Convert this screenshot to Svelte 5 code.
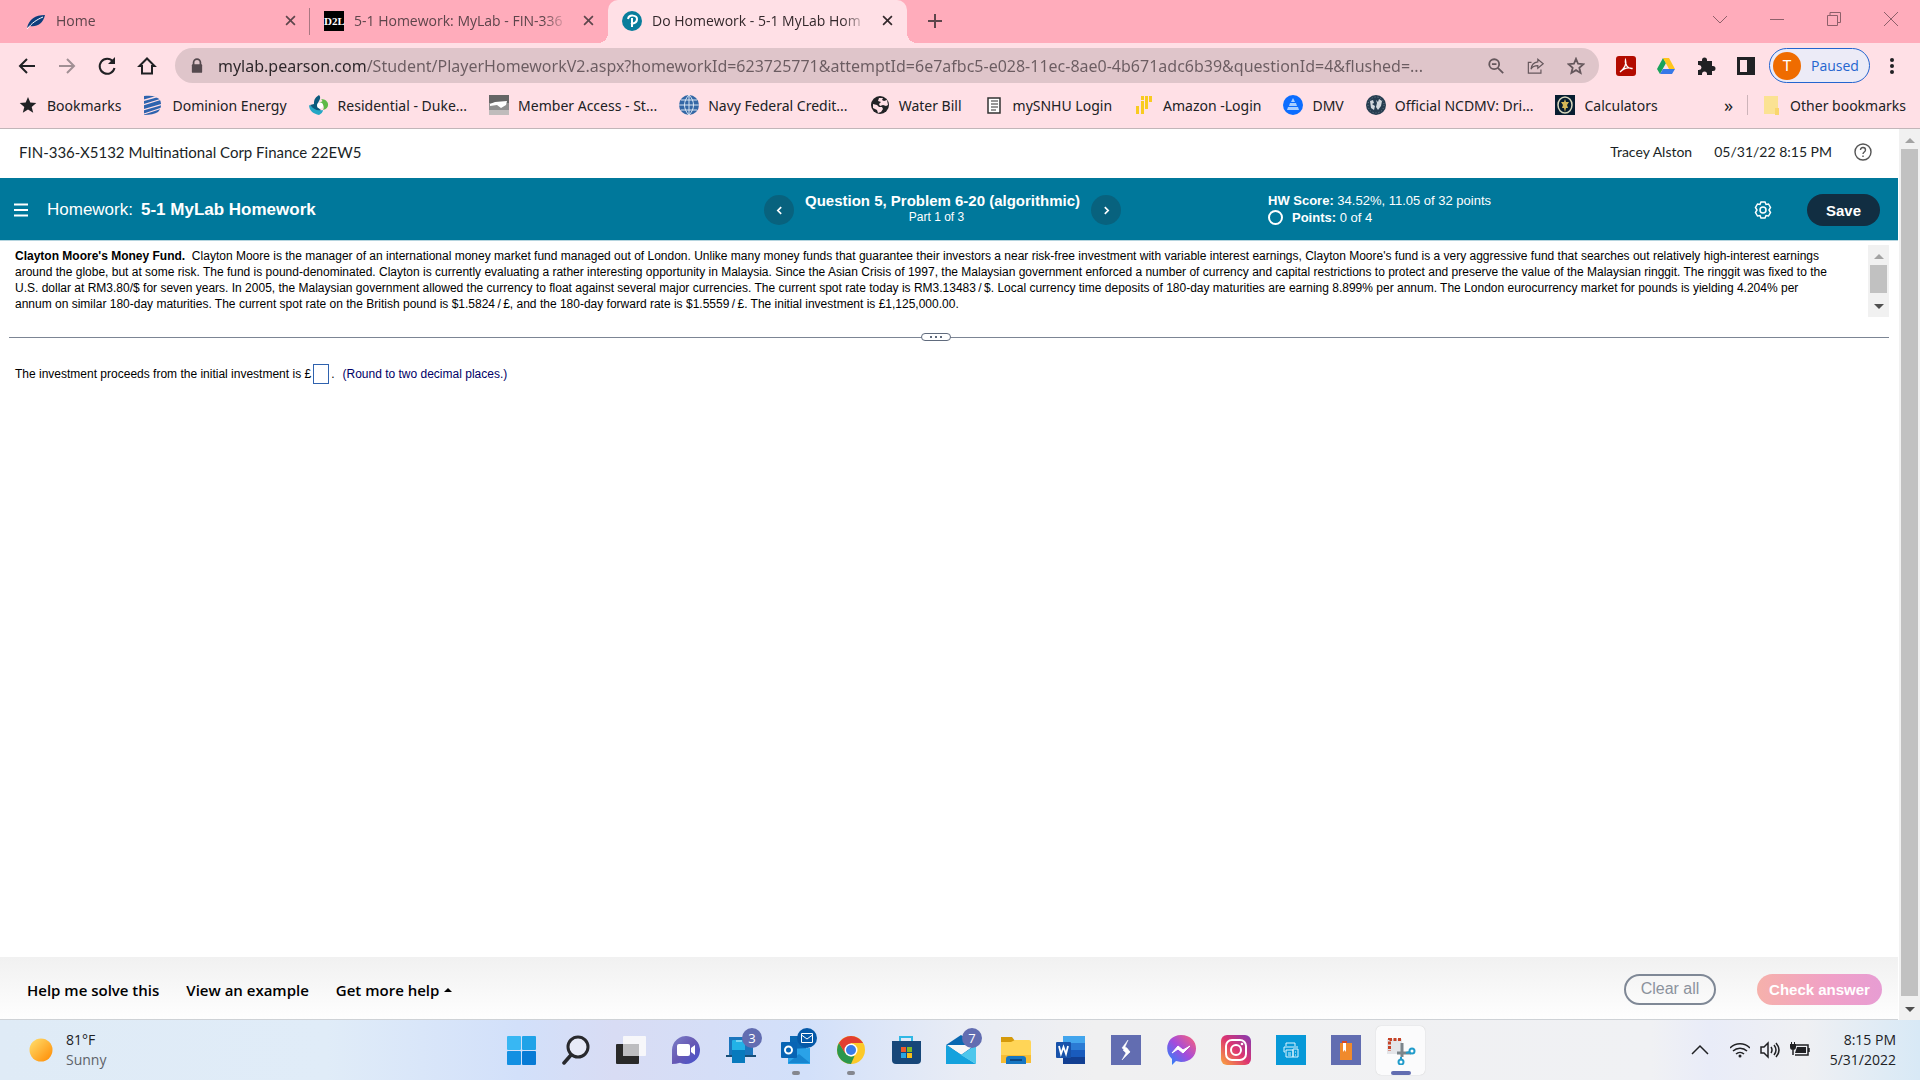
<script lang="ts">
    let answer = $state('');
    let url = $state('mylab.pearson.com/Student/PlayerHomeworkV2.aspx?homeworkId=623725771&attemptId=6e7afbc5-e028-11ec-8ae0-4b671adc6b39&questionId=4&flushed=...');

    const bookmarks = [
        { icon: 'star', label: 'Bookmarks' },
        { icon: 'dominion', label: 'Dominion Energy' },
        { icon: 'duke', label: 'Residential - Duke...' },
        { icon: 'state', label: 'Member Access - St...' },
        { icon: 'navy', label: 'Navy Federal Credit...' },
        { icon: 'world', label: 'Water Bill' },
        { icon: 'page', label: 'mySNHU Login' },
        { icon: 'amazon', label: 'Amazon -Login' },
        { icon: 'dmv', label: 'DMV' },
        { icon: 'ncdmv', label: 'Official NCDMV: Dri...' },
        { icon: 'calc', label: 'Calculators' }
    ];

    const apps = [
        { icon: 'windows', label: 'Start' },
        { icon: 'search', label: 'Search' },
        { icon: 'taskview', label: 'Task view' },
        { icon: 'chat', label: 'Chat' },
        { icon: 'phone', label: 'Your Phone', badge: '3' },
        { icon: 'outlook', label: 'Outlook', running: true },
        { icon: 'chrome', label: 'Chrome', running: true },
        { icon: 'store', label: 'Store' },
        { icon: 'mail', label: 'Mail', badge: '7' },
        { icon: 'folder', label: 'File Explorer' },
        { icon: 'word', label: 'Word' },
        { icon: 'bolt', label: 'Shortcuts' },
        { icon: 'messenger', label: 'Messenger' },
        { icon: 'instagram', label: 'Instagram' },
        { icon: 'printer', label: 'Printer' },
        { icon: 'book', label: 'Reader' },
        { icon: 'snip', label: 'Snipping Tool', active: true }
    ];
</script>

{#snippet favicon(name: string)}
    <svg class="fav" viewBox="0 0 20 20" aria-hidden="true">
        {#if name === 'star'}
            <path d="M10 2l2.3 5.6 6 .4-4.6 3.9 1.5 5.9L10 14.5l-5.2 3.3 1.5-5.9L1.700 8l6-.4z" fill="#202124" />
        {:else if name === 'dominion'}
            <path d="M1 1c7-1 13 0 16 4 2 4 1 9-2 12-3 2-8 3-14 3z" fill="#2d63ae" />
            <path d="M0 5.500L16 1M0 10l19-6M0 15l20-6M1 19l18-6" stroke="#ffe0e6" stroke-width="1.300" />
        {:else if name === 'duke'}
            <path d="M12 4c8 0 10 9 2 11 2-4 0-6-4-8 4 0 4-1 2-3z" fill="#5eb947" />
            <path d="M0 10c0 6 5 9 10 10 2-1 4-3 4-5-5 1-8-2-14-5z" fill="#25a7c5" />
            <path d="M10 0C5 3 5 6 5 9l-4 1c3 4 7 6 11 5-4-3-4-6-2-9 1-2 2-4 0-6z" fill="#0b5a7d" />
            <circle cx="11" cy="10.500" r="3" fill="#fff" />
        {:else if name === 'state'}
            <path d="M0 0h20v8H0z" fill="#656565" /><path d="M0 8h20v12H0z" fill="#8f8f8f" /><path d="M0 15h20v5H0z" fill="#c0bcbc" />
            <path d="M1 9l5-2 12-1-1 4-5 3-4-3-7 1z" fill="#fff" />
        {:else if name === 'navy'}
            <circle cx="10" cy="10" r="10" fill="#3467a5" />
            <path d="M0 10h20M2 5h16M2 15h16M10 0v20M10 0C4 6 4 14 10 20M10 0c6 6 6 14 0 20" fill="none" stroke="#d9e6f3" stroke-width="1" />
        {:else if name === 'world'}
            <circle cx="10" cy="10" r="9" fill="#222326" />
            <path d="M3 9l4 1 2 2h3l1 2-2 3-3 1-1-3-4-2zM9 3l4 0-1 2 2 1 3-1 1 5-2 1-3-1-3 1-1-2 2-2-3-1z" fill="#ffe0e6" />
        {:else if name === 'page'}
            <path d="M4 3h12v15H4z" fill="#fff" stroke="#333" stroke-width="1.500" /><path d="M7 6h7M7 9h7M7 12h7M7 15h5" stroke="#777" stroke-width="1.300" />
        {:else if name === 'amazon'}
            <path d="M2 11h3v8H2zM7 6h3v13H7zM7 1h3v4H7zM11 1h3v13h-3zM15 1h3v6h-3z" fill="#f8cb20" />
        {:else if name === 'dmv'}
            <circle cx="10" cy="10" r="10" fill="#0c6dff" /><path d="M10 3l2 4H8zM7 8h6l1 3H6zM5 12h10l1 3H4z" fill="#a8ceff" />
        {:else if name === 'ncdmv'}
            <circle cx="10" cy="10" r="10" fill="#263d50" /><path d="M4 6l3-1 1 3-2 1 3 2-1 4-3-2zM10 5l2 2 1-3 3 2-1 5-3 4-2-3 1-4z" fill="#d2d8dd" /><circle cx="10" cy="10" r="8" fill="none" stroke="#708190" stroke-dasharray="1 2" />
        {:else if name === 'calc'}
            <path d="M0 0h20v20H0z" fill="#071d31" /><ellipse cx="10" cy="10" rx="7" ry="8" fill="none" stroke="#d6d5bb" stroke-width="1.500" /><path d="M10 4l1 3 3 0-2 3 1 3-2 0-1 4-1-4-2 0 1-3-2-3 3 0z" fill="#d4b657" />
        {:else if name === 'leaf'}
            <path d="M1 17C3 8 9 4 19 4c-2 9-8 12-15 11z" fill="#0d3e7c" /><path d="M1 18C6 12 10 9 17 6" stroke="#fff" stroke-width="1" fill="none" />
        {:else if name === 'pearson'}
            <circle cx="10" cy="10" r="10" fill="#087d9c" /><path d="M6 8c1-5 9-4 9 0 0 4-4 5-6 4M10 7v9" fill="none" stroke="#fff" stroke-width="2" />
        {:else if name === 'folder'}
            <path d="M3 1h14v18H3z" fill="#fbe293" /><path d="M14 13h4v7h-4z" fill="#f9d66d" />
        {/if}
    </svg>
{/snippet}

{#snippet appIcon(name: string)}
    <svg class="app-icon" viewBox="0 0 30 30" aria-hidden="true">
        {#if name === 'windows'}
            <rect x="1" y="1" width="14" height="14" rx="1" fill="#38b7f3" /><rect x="16" y="1" width="14" height="14" rx="1" fill="#20a3e8" />
            <rect x="1" y="16" width="14" height="14" rx="1" fill="#1390e2" /><rect x="16" y="16" width="14" height="14" rx="1" fill="#077bd5" />
        {:else if name === 'search'}
            <circle cx="17" cy="12" r="10" fill="#e7eaf7" stroke="#28292d" stroke-width="3" /><path d="M10 20l-7 8" stroke="#28292d" stroke-width="3.500" stroke-linecap="round" />
        {:else if name === 'taskview'}
            <rect x="0" y="9" width="23" height="20" rx="1" fill="#292929" /><rect x="7" y="1" width="23" height="20" rx="1" fill="#f7f7fa" /><path d="M7 9h16v12H7z" fill="#bdbdc0" />
        {:else if name === 'chat'}
            <path d="M1 29V15a14 14 0 1 1 8 12.700Q5 29 1 29z" fill="url(#chat)" /><rect x="6" y="9" width="13" height="12" rx="2" fill="#fff" /><path d="M20 13l4-3v10l-4-3z" fill="#fff" />
        {:else if name === 'phone'}
            <path d="M3 2h24v19H3z" fill="#1b75bd" /><path d="M0 20h30v2H0z" fill="#174f79" /><rect x="6" y="5" width="13" height="23" rx="1" fill="#22b2e7" /><path d="M6 15h13v13H6z" fill="#087abd" /><path d="M10 6h6" stroke="#c9f4ff" />
        {:else if name === 'outlook'}
            <path d="M9 1h16v15H9z" fill="#0968b4" /><path d="M7 14l22-1v16H7z" fill="#2aa2e8" /><path d="M7 28l11-9 11 9z" fill="#1685d0" /><rect x="0" y="7" width="16" height="16" rx="1" fill="#0864b4" /><circle cx="7.500" cy="15" r="3.500" fill="none" stroke="#fff" stroke-width="2" />
        {:else if name === 'chrome'}
            <circle cx="15" cy="15" r="14" fill="#fcc928" /><path d="M15 29A14 14 0 0 1 2.900 8L9.400 18.200 15 21.500l3.500-.500z" fill="#2b974d" /><path d="M2.900 8a14 14 0 0 1 24.200 0H15l-6 10z" fill="#e23e31" /><circle cx="15" cy="15" r="6.500" fill="#fff" /><circle cx="15" cy="15" r="5" fill="#397ce8" />
        {:else if name === 'store'}
            <path d="M9 8V2h12v6" fill="none" stroke="#30b8e5" stroke-width="2" /><path d="M1 6h29v19q0 4-4 4H5q-4 0-4-4z" fill="#174779" /><path d="M10 12h5v5h-5z" fill="#f05a2a" /><path d="M16 12h5v5h-5z" fill="#7eb927" /><path d="M10 18h5v5h-5z" fill="#28a6e3" /><path d="M16 18h5v5h-5z" fill="#f9bd19" />
        {:else if name === 'mail'}
            <path d="M0 10L15 0l15 10-15 11z" fill="#0968b1" /><path d="M1 10h28L15 20z" fill="#f7f7f7" /><path d="M0 10l30 19H0z" fill="#14a2dd" /><path d="M30 10v19L15 20z" fill="#4dc7ec" />
        {:else if name === 'folder'}
            <path d="M0 2h11l3 4h-2v5H0z" fill="#d59a0b" /><path d="M0 7h10l4-2h14q2 0 2 2v21H0z" fill="#ffd557" /><path d="M0 20h30v8H0z" fill="#f7bd34" /><path d="M5 29v-5q0-3 3-3h14q3 0 3 3v5z" fill="#1676c2" /><path d="M9 25h12" stroke="#0b4884" stroke-width="2" />
        {:else if name === 'word'}
            <path d="M7 1h22v8H7z" fill="#42a5ed" /><path d="M7 8h22v7H7z" fill="#2b7bd4" /><path d="M7 15h22v7H7z" fill="#195bbd" /><path d="M7 22h22v7H7z" fill="#123f92" /><rect x="0" y="7" width="15" height="16" rx="1" fill="#1852aa" /><path d="M3 11l2 8 2.500-7 2.500 7 2-8" fill="none" stroke="#fff" stroke-width="1.800" />
        {:else if name === 'bolt'}
            <path d="M0 0h30v30H0z" fill="#626db1" /><path d="M17 5l-6 8 3 2 5 2-3-4-2-1zM11 25l8-8-5-3-2 1 3 3z" fill="#fff" stroke="#fff" stroke-width=".5" />
        {:else if name === 'messenger'}
            <path d="M6 30v-6C-3 16 1 0 15 0c20 0 20 27 0 27l-5-1z" fill="url(#messenger)" /><path d="M6 18l6-7 5 4 7-4-7 7-5-4z" fill="#fff" stroke="#fff" stroke-width="1" />
        {:else if name === 'instagram'}
            <rect width="30" height="30" rx="6" fill="url(#instagram)" /><rect x="5" y="5" width="20" height="20" rx="6" fill="none" stroke="#fff" stroke-width="2" /><circle cx="15" cy="15" r="5" fill="none" stroke="#fff" stroke-width="2" /><circle cx="21" cy="9" r="1.300" fill="#fff" />
        {:else if name === 'printer'}
            <path d="M0 0h30v30H0z" fill="#0799d8" /><path d="M10 11V8h9v3M9 17H8v-5h14M10 15h7v7h-7zM12 18h3M12 20h3M17 14h5v8h-5zM19 17h1M19 20h1" fill="none" stroke="#dff5ff" />
        {:else if name === 'book'}
            <path d="M0 0h30v30H0z" fill="#626db1" /><path d="M9 8h12v17H9z" fill="#f08a2c" /><path d="M12 8h3v9l-1.500-2L12 17z" fill="#fff" /><path d="M11 6h5v2h-5z" fill="#d64821" />
        {:else if name === 'snip'}
            <rect x="1" y="4" width="15" height="15" fill="#e4e5e9" /><path d="M15 4.500H3.500V16" fill="none" stroke="#c64327" stroke-width="3" stroke-dasharray="3 1.500" /><path d="M16 8v14M11 18h14" stroke="#7c858b" stroke-width="3" /><circle cx="26" cy="16" r="2.500" fill="#fff" stroke="#219ccb" stroke-width="2" /><circle cx="15" cy="27" r="2.500" fill="#fff" stroke="#219ccb" stroke-width="2" /><path d="M20 18l4-1M15 25v-3" stroke="#219ccb" stroke-width="2" />
        {/if}
    </svg>
{/snippet}

<svg class="defs" width="0" height="0" aria-hidden="true">
    <defs>
        <linearGradient id="chat" x1="0" y1="0" x2="1" y2="1"><stop offset="0" stop-color="#7c80c8" /><stop offset=".5" stop-color="#6759b4" /><stop offset="1" stop-color="#4352cf" /></linearGradient>
        <linearGradient id="messenger" x1="1" y1="0" x2="0" y2="1"><stop offset="0" stop-color="#ff6474" /><stop offset=".5" stop-color="#a44bdc" /><stop offset="1" stop-color="#168cff" /></linearGradient>
        <linearGradient id="instagram" x1="1" y1="0" x2="0" y2="1"><stop offset="0" stop-color="#823bb3" /><stop offset=".5" stop-color="#dd3470" /><stop offset="1" stop-color="#fba73e" /></linearGradient>
        <linearGradient id="sun" x1="0" y1="0" x2="1" y2="1"><stop offset="0" stop-color="#ffe170" /><stop offset="1" stop-color="#ff8900" /></linearGradient>
    </defs>
</svg>

<div class="screen">
    <div class="tabstrip">
        <div class="tab first">
            {@render favicon('leaf')}
            <span class="tab-title">Home</span>
            <button class="close" aria-label="Close tab"><svg viewBox="0 0 10 10"><path d="M1 1l8 8M9 1L1 9" /></svg></button>
        </div>
        <div class="tab second">
            <span class="d2l">D2L</span>
            <span class="tab-title">5-1 Homework: MyLab - FIN-336</span>
            <button class="close" aria-label="Close tab"><svg viewBox="0 0 10 10"><path d="M1 1l8 8M9 1L1 9" /></svg></button>
        </div>
        <div class="tab current">
            {@render favicon('pearson')}
            <span class="tab-title">Do Homework - 5-1 MyLab Hom</span>
            <button class="close" aria-label="Close tab"><svg viewBox="0 0 10 10"><path d="M1 1l8 8M9 1L1 9" /></svg></button>
        </div>
        <button class="newtab" aria-label="New tab"><svg viewBox="0 0 16 16"><path d="M8 1v14M1 8h14" /></svg></button>
        <div class="winctl">
            <button aria-label="Search tabs"><svg viewBox="0 0 14 14"><path d="M0 4l7 7 7-7" /></svg></button>
            <button aria-label="Minimize"><svg viewBox="0 0 14 14"><path d="M0 7.500h14" /></svg></button>
            <button aria-label="Restore"><svg viewBox="0 0 14 14"><path d="M.5 3.500h10v10H.5zM3 3.500v-3h10.500v10h-3" /></svg></button>
            <button aria-label="Close"><svg viewBox="0 0 14 14"><path d="M0 0l14 14M14 0L0 14" /></svg></button>
        </div>
    </div>

    <div class="toolbar">
        <button class="tool" aria-label="Back"><svg viewBox="0 0 20 20"><path d="M18 10H3M10 3l-7 7 7 7" /></svg></button>
        <button class="tool faded" aria-label="Forward"><svg viewBox="0 0 20 20"><path d="M2 10h15M10 3l7 7-7 7" /></svg></button>
        <button class="tool" aria-label="Reload"><svg viewBox="0 0 20 20"><path d="M16 5.500A7.500 7.500 0 1 0 17.500 12" /><path d="M18 1v7h-7z" class="solid" /></svg></button>
        <button class="tool" aria-label="Home"><svg viewBox="0 0 20 20"><path d="M2.500 10L10 2.500 17.500 10H15v7.500H5V10z" /></svg></button>
        <div class="omnibox">
            <svg class="lock" viewBox="0 0 14 18"><path d="M3 8V5a4 4 0 0 1 8 0v3" fill="none" stroke="#55494e" stroke-width="2" /><rect x="1" y="7" width="12" height="10" rx="1" fill="#55494e" /></svg>
            <input class="url" aria-label="Address" bind:value={url} spellcheck="false" />
            <button aria-label="Zoom"><svg viewBox="0 0 20 20"><circle cx="8" cy="8" r="5.500" /><path d="M12 12l6 6M5.500 8h5" /></svg></button>
            <button aria-label="Share"><svg viewBox="0 0 20 20"><path class="thin" d="M5 6H1.500v12h14v-4M12 2.500l6 5-6 5V9.500c-4 0-6 1-7.500 4C5 9 7 6 12 5.500z" /></svg></button>
            <button aria-label="Bookmark"><svg viewBox="0 0 20 20"><path d="M10 2l2.300 5.500 5.900.5-4.500 3.900 1.400 5.800L10 14.600l-5.100 3.100 1.400-5.800L1.800 8l5.900-.5z" /></svg></button>
        </div>
        <div class="extensions">
            <button class="tool" aria-label="Adobe Acrobat"><svg viewBox="0 0 20 20"><rect width="20" height="20" rx="3" fill="#b30b00" stroke="none" /><path d="M4 16C8 13 11 8 9.500 4c-1 5 3 9 7 8.500-4-1.500-9 0-12.500 3.500" stroke="#fff" stroke-width="1.300" /></svg></button>
            <button class="tool" aria-label="Google Drive"><svg viewBox="0 0 20 20" class="flat"><path d="M7 2l3 5-6 11-3-5z" fill="#19a35b" /><path d="M7 2h6l6 11h-6z" fill="#ffc51b" /><path d="M4 18l3-5h12l-3 5z" fill="#3778e8" /></svg></button>
            <button class="tool" aria-label="Extensions"><svg viewBox="0 0 20 20"><path class="solid" d="M2 5h4V4a2.500 2.500 0 0 1 5 0v1h5v5h1a2.500 2.500 0 0 1 0 5h-1v4h-5v-1a2.500 2.500 0 0 0-5 0v1H2v-5h1a2.500 2.500 0 0 0 0-5H2z" /></svg></button>
            <button class="tool" aria-label="Side panel"><svg viewBox="0 0 20 20"><path class="solid" d="M1 1h18v18H1zM4 4v12h7V4z" fill-rule="evenodd" /></svg></button>
        </div>
        <button class="profile"><span class="avatar">T</span><span>Paused</span></button>
        <button class="tool" aria-label="Menu"><svg viewBox="0 0 20 20"><circle class="solid" cx="10" cy="4" r="2" /><circle class="solid" cx="10" cy="10" r="2" /><circle class="solid" cx="10" cy="16" r="2" /></svg></button>
    </div>

    <nav class="bookmarks">
        {#each bookmarks as mark}
            <a href="#top">{@render favicon(mark.icon)}<span>{mark.label}</span></a>
        {/each}
        <button class="more" aria-label="More bookmarks">»</button>
        <a class="other" href="#top">{@render favicon('folder')}<span>Other bookmarks</span></a>
    </nav>

    <div class="viewport">
        <div class="page">
            <header class="course">
                <span class="course-name">FIN-336-X5132 Multinational Corp Finance 22EW5</span>
                <span>Tracey Alston</span>
                <span>05/31/22 8:15 PM</span>
                <button aria-label="Help"><svg viewBox="0 0 18 18"><circle cx="9" cy="9" r="8" /><path d="M6.500 7c0-3.500 5-3 5 0 0 2-2.500 2-2.500 4M9 12.500V14" /></svg></button>
            </header>

            <div class="banner">
                <div class="assignment">
                    <button class="burger" aria-label="Menu"><svg viewBox="0 0 14 14"><path d="M0 1.500h14M0 7h14M0 12.500h14" /></svg></button>
                    <span>Homework:</span>
                    <strong>5-1 MyLab Homework</strong>
                </div>
                <div class="question-nav">
                    <button class="round" aria-label="Previous question"><svg viewBox="0 0 8 8"><path d="M5.500 1l-3 3 3 3" /></svg></button>
                    <div class="question-title">
                        <strong>Question 5, Problem 6-20 (algorithmic)</strong>
                        <span>Part 1 of 3</span>
                    </div>
                    <button class="round" aria-label="Next question"><svg viewBox="0 0 8 8"><path d="M2.500 1l3 3-3 3" /></svg></button>
                </div>
                <div class="status">
                    <div class="score">
                        <span><b>HW Score:</b> 34.52%, 11.05 of 32 points</span>
                        <span class="points"><i></i><span><b>Points:</b> 0 of 4</span></span>
                    </div>
                    <button class="gear" aria-label="Settings"><svg viewBox="0 0 18 18"><path d="M7 1h4l1 2.500 2.500-.5 2 3.500L15 9l1.500 2.500-2 3.500-2.500-.5L11 17H7l-1-2.500-2.500.5-2-3.500L3 9 1.500 6.500l2-3.500 2.500.5z" /><circle cx="9" cy="9" r="3" /></svg></button>
                    <button class="save">Save</button>
                </div>
            </div>

            <section class="problem">
                <p>
                    <b>Clayton Moore's Money Fund.</b>&nbsp; Clayton Moore is the manager of an international money market fund managed out of London. Unlike many money funds that guarantee their investors a near risk-free investment with variable interest earnings, Clayton Moore's fund is a very aggressive fund that searches out relatively high-interest earnings around the globe, but at some risk. The fund is pound-denominated. Clayton is currently evaluating a rather interesting opportunity in Malaysia. Since the Asian Crisis of 1997, the Malaysian government enforced a number of currency and capital restrictions to protect and preserve the value of the Malaysian ringgit. The ringgit was fixed to the U.S. dollar at RM3.80/$ for seven years. In 2005, the Malaysian government allowed the currency to float against several major currencies. The current spot rate today is RM3.13483&thinsp;/&thinsp;$. Local currency time deposits of 180-day maturities are earning 8.899% per annum. The London eurocurrency market for pounds is yielding 4.204% per annum on similar 180-day maturities. The current spot rate on the British pound is $1.5824&thinsp;/&thinsp;£, and the 180-day forward rate is $1.5559&thinsp;/&thinsp;£. The initial investment is £1,125,000.00.
                </p>
                <div class="scrollbar small">
                    <i class="up"></i>
                    <div class="thumb"></div>
                    <i class="down"></i>
                </div>
            </section>

            <div class="divider">
                <button aria-label="Resize"><i></i><i></i><i></i></button>
            </div>

            <section class="answer">
                <label for="proceeds">The investment proceeds from the initial investment is £</label>
                <input id="proceeds" type="text" bind:value={answer} />
                <span>.</span>
                <span class="hint">(Round to two decimal places.)</span>
            </section>

            <footer class="actions">
                <button class="link">Help me solve this</button>
                <button class="link">View an example</button>
                <button class="link">Get more help <i></i></button>
                <button class="clear">Clear all</button>
                <button class="check">Check answer</button>
            </footer>
        </div>
        <div class="scrollbar">
            <i class="up"></i>
            <div class="thumb"></div>
            <i class="down"></i>
        </div>
    </div>

    <div class="taskbar">
        <div class="weather">
            <svg viewBox="0 0 24 24"><circle cx="12" cy="12" r="11.500" fill="url(#sun)" /></svg>
            <div><span>81°F</span><span class="sky">Sunny</span></div>
        </div>
        <div class="apps">
            {#each apps as app}
                <button class="app" class:active={app.active} aria-label={app.label}>
                    {@render appIcon(app.icon)}
                    {#if app.badge}<span class="badge">{app.badge}</span>{/if}
                    {#if app.icon === 'outlook'}
                        <span class="badge blue"><svg viewBox="0 0 12 10"><path d="M.5.5h11v9H.5zM.5 2L6 6l5.500-4" /></svg></span>
                    {/if}
                    {#if app.running || app.active}<i class="dot"></i>{/if}
                </button>
            {/each}
        </div>
        <div class="tray">
            <svg viewBox="0 0 20 20"><path d="M2 14l8-8 8 8" /></svg>
            <div class="tray-icons">
                <svg viewBox="0 0 20 20"><path d="M0 8a14 14 0 0 1 20 0M3 11a10 10 0 0 1 14 0M6 14a6 6 0 0 1 8 0" /><circle cx="10" cy="16" r="1.500" class="solid" /></svg>
                <svg viewBox="0 0 20 20"><path d="M1 7h3l4-4v14l-4-4H1zM11 7q2 3 0 6M14 5q4 5 0 10M16 3q6 7 0 14" /></svg>
                <svg viewBox="0 0 20 20"><path d="M6 5h12v10H5M3 15v-5M19 8v4" /><path class="solid" d="M0 4h6v3q0 3-3 3T0 7zM1 2h1v2H1zM4 2h1v2H4zM7 7h9v6H5z" /></svg>
            </div>
            <div class="clock"><span>8:15 PM</span><span>5/31/2022</span></div>
        </div>
    </div>
</div>

<style>
    :global(body) {
        margin: 0;
    }

    .screen {
        display: flex;
        flex-direction: column;
        height: 100vh;
        overflow: hidden;
        font-family: "Open Sans", "Noto Sans", sans-serif;
        font-size: 14px;
        color: #202124;
        background: #fff;
    }

    .screen :global(*) {
        box-sizing: border-box;
    }

    .defs {
        position: absolute;
    }

    svg {
        display: block;
        flex: none;
    }

    button {
        display: flex;
        align-items: center;
        justify-content: center;
        flex: none;
        margin: 0;
        padding: 0;
        border: 0;
        background: none;
        font: inherit;
        color: inherit;
    }

    a {
        color: inherit;
        text-decoration: none;
    }

    .fav {
        width: 20px;
        height: 20px;
    }

    /* browser tabs */
    .tabstrip {
        display: flex;
        height: 43px;
        flex: none;
        background: #ffacbb;
    }

    .tab {
        display: flex;
        align-items: center;
        gap: 10px;
        width: 299px;
        padding: 0 11px 2px 14px;
        color: #5d454b;
    }

    .tab.first {
        width: 309px;
        padding-left: 26px;
        padding-right: 10px;
    }

    .tab.second {
        border-left: 1px solid transparent;
        border-image: linear-gradient(transparent 9px, #a97781 9px, #a97781 34px, transparent 34px) 1;
    }

    .tab.current {
        position: relative;
        width: 299px;
        border-radius: 10px 10px 0 0;
        background: #ffe0e6;
        color: #33282b;
    }

    .tab.current::before,
    .tab.current::after {
        content: "";
        position: absolute;
        bottom: 0;
        width: 10px;
        height: 10px;
    }

    .tab.current::before {
        right: 100%;
        background: radial-gradient(circle at 0 0, transparent 10px, #ffe0e6 10px);
    }

    .tab.current::after {
        left: 100%;
        background: radial-gradient(circle at 100% 0, transparent 10px, #ffe0e6 10px);
    }

    .tab-title {
        flex: 1;
        overflow: hidden;
        white-space: nowrap;
        mask-image: linear-gradient(90deg, #000 88%, transparent);
    }

    .d2l {
        width: 20px;
        background: #000;
        color: #fff;
        font: bold 11px/20px "Liberation Serif", serif;
        text-align: center;
    }

    .close {
        width: 18px;
        height: 20px;
    }

    .close svg {
        width: 11px;
        height: 11px;
        stroke: currentColor;
        stroke-width: 1.5;
    }

    .newtab {
        width: 56px;
        height: 41px;
    }

    .newtab svg {
        width: 16px;
        height: 16px;
        stroke: #5d454b;
        stroke-width: 2;
    }

    .winctl {
        display: flex;
        height: 38px;
        margin-left: auto;
        padding-right: 1px;
    }

    .winctl button {
        width: 57px;
    }

    .winctl svg {
        width: 14px;
        height: 14px;
        fill: none;
        stroke: #8e606a;
    }

    /* address row */
    .toolbar {
        display: flex;
        align-items: center;
        flex: none;
        height: 45px;
        padding: 0 8px 0 7px;
        background: #ffe0e6;
    }

    .tool {
        width: 40px;
        height: 36px;
    }

    .tool svg {
        width: 20px;
        height: 20px;
        fill: none;
        stroke: #202124;
        stroke-width: 2;
    }

    .tool .flat {
        stroke: none;
    }

    .tool.faded svg {
        stroke: #a18f94;
    }

    .solid {
        fill: #202124;
        stroke: none;
    }

    .omnibox {
        display: flex;
        align-items: center;
        flex: 1;
        height: 35px;
        margin-left: 8px;
        padding: 0 3px 0 16px;
        border-radius: 18px;
        background: #dfc5ca;
    }

    .lock {
        width: 12px;
        height: 16px;
    }

    /* host name darker than the rest of the address */
    .url {
        flex: 1;
        min-width: 0;
        margin-left: 15px;
        padding: 0;
        border: 0;
        outline: 0;
        font-family: "Noto Sans", sans-serif;
        font-size: 16px;
        color: transparent;
        background: linear-gradient(90deg, #2b2528 149px, #6b5c61 149px);
        background-clip: text;
    }

    .omnibox button {
        width: 40px;
        height: 30px;
    }

    .omnibox button svg {
        width: 18px;
        height: 18px;
        fill: none;
        stroke: #65575c;
        stroke-width: 2;
    }

    .omnibox .thin {
        stroke-width: 1.3;
    }

    .extensions {
        display: flex;
        padding: 0 3px 0 7px;
    }

    .profile {
        gap: 10px;
        justify-content: flex-start;
        width: 101px;
        height: 35px;
        margin-right: 2px;
        padding-left: 3px;
        border: 1px solid #2465cf;
        border-radius: 18px;
        background: #ecebf7;
        color: #2465cf;
    }

    .avatar {
        width: 28px;
        border-radius: 50%;
        background: #ef6c00;
        color: #fff;
        font: 15px/28px Roboto, sans-serif;
    }

    /* bookmarks row */
    .bookmarks {
        display: flex;
        align-items: center;
        flex: none;
        gap: 22px;
        height: 41px;
        padding: 0 14px 6px 18px;
        border-bottom: 1px solid #c2b6b9;
        background: #ffe0e6;
        font-family: "Noto Sans", sans-serif;
        white-space: nowrap;
    }

    .bookmarks a {
        display: flex;
        align-items: center;
        gap: 9px;
    }

    .more {
        margin-left: auto;
        font-size: 18px;
    }

    .bookmarks .other {
        margin-left: -8px;
        padding-left: 13px;
        border-left: 1px solid #cdb4ba;
    }

    /* page and its scrollbar */
    .viewport {
        display: flex;
        flex: 1;
        min-height: 0;
    }

    .page {
        display: flex;
        flex: 1;
        flex-direction: column;
        min-width: 0;
        font-family: "Liberation Sans", Arial, sans-serif;
        color: #000;
    }

    .scrollbar {
        display: flex;
        flex-direction: column;
        align-items: center;
        width: 21px;
        padding: 9px 0 8px;
        gap: 6px;
        background: #f1f1f1;
    }

    .scrollbar .thumb {
        flex: 1;
        width: 17px;
        background: #c1c1c1;
    }

    .up,
    .down {
        border: 5px solid transparent;
    }

    .up {
        border-top: 0;
        border-bottom-color: #a3a3a3;
    }

    .down {
        margin-top: 5px;
        border-bottom: 0;
        border-top-color: #505050;
    }

    .course {
        display: flex;
        align-items: center;
        gap: 22px;
        flex: none;
        height: 49px;
        padding: 0 27px 4px 19px;
        font-family: Lato, sans-serif;
        color: #1a1f26;
    }

    .course-name {
        flex: 1;
        font-size: 15px;
    }

    .course svg {
        width: 18px;
        height: 18px;
        fill: none;
        stroke: #555;
        stroke-width: 1.4;
    }

    .banner {
        display: grid;
        grid-template-columns: 764fr 357px 777fr;
        align-items: center;
        flex: none;
        height: 63px;
        margin-right: 1px;
        padding-top: 2px;
        border-bottom: 1px solid #b5d5df;
        background: #00789b;
        color: #fff;
    }

    .assignment {
        display: flex;
        align-items: center;
        font-size: 17px;
    }

    .burger {
        margin: 0 19px 0 14px;
    }

    .burger svg {
        width: 14px;
        height: 14px;
        stroke: #fff;
        stroke-width: 2;
    }

    .assignment strong {
        margin-left: 8px;
    }

    .question-nav {
        display: flex;
        align-items: center;
        justify-content: space-between;
    }

    .question-title {
        display: flex;
        flex-direction: column;
        align-items: center;
        padding-bottom: 2px;
        font-size: 12px;
        line-height: 16px;
        white-space: nowrap;
    }

    .question-title strong {
        font-size: 15px;
    }

    .question-title span {
        padding-right: 12px;
    }

    .round {
        width: 30px;
        height: 30px;
        border-radius: 50%;
        background: #08627e;
    }

    .round svg {
        width: 9px;
        height: 9px;
        fill: none;
        stroke: #fff;
        stroke-width: 1.5;
    }

    .status {
        display: flex;
        align-items: center;
        padding: 0 18px 0 147px;
        font-size: 13px;
        line-height: 17px;
    }

    .score {
        display: flex;
        flex: 1;
        flex-direction: column;
        padding-bottom: 2px;
    }

    .points {
        display: flex;
        align-items: center;
        gap: 9px;
    }

    .points i {
        width: 15px;
        height: 15px;
        border: 2px solid #fff;
        border-radius: 50%;
    }

    .gear svg {
        width: 18px;
        height: 18px;
        fill: none;
        stroke: #fff;
        stroke-width: 1.5;
    }

    .save {
        width: 73px;
        height: 32px;
        margin-left: 35px;
        border-radius: 16px;
        background: #112e42;
        font-size: 15px;
        font-weight: bold;
    }

    .problem {
        display: flex;
        flex: none;
        height: 72px;
        margin: 4px 10px 0 15px;
        font-size: 12px;
        line-height: 16px;
    }

    .problem p {
        flex: 1;
        margin: 0;
        padding: 3px 33px 0 0;
    }

    .divider {
        display: flex;
        align-items: center;
        justify-content: center;
        flex: none;
        height: 10px;
        margin: 15px 10px 0 9px;
        padding-right: 26px;
        background: linear-gradient(#7c8594, #7c8594) center / 100% 1px no-repeat;
    }

    .divider button {
        gap: 3px;
        width: 30px;
        height: 8px;
        border: 1px solid #606b7d;
        border-radius: 4px;
        background: #fff;
    }

    .divider i {
        width: 2px;
        height: 2px;
        background: #606b7d;
    }

    .answer {
        display: flex;
        align-items: center;
        margin: 22px 15px auto;
        font-size: 12px;
    }

    .answer input {
        width: 16px;
        height: 20px;
        margin: 0 2px;
        padding: 0;
        border: 1px solid #2f62ae;
        font: inherit;
    }

    .hint {
        margin-left: 8px;
        color: #000066;
    }

    .actions {
        display: flex;
        align-items: center;
        flex: none;
        height: 63px;
        margin-right: 1px;
        padding: 2px 16px 0 27px;
        background: linear-gradient(#f1f1f1, #fefefe);
        border-bottom: 1px solid #ced2d6;
    }

    .link {
        gap: 5px;
        margin: 2px 27px 0 0;
        font: 600 15px "Open Sans", sans-serif;
    }

    .link i {
        border: 4px solid transparent;
        border-top: 0;
        border-bottom-color: #000;
    }

    .clear,
    .check {
        height: 31px;
        border-radius: 16px;
    }

    .clear {
        width: 92px;
        margin: 0 41px 0 auto;
        border: 2px solid #7f8896;
        color: #8b929d;
        font-size: 16px;
    }

    .check {
        width: 125px;
        background: linear-gradient(90deg, #f6b1ab, #f0a0c8 60%, #e79dd3);
        color: #fff;
        font-size: 15px;
        font-weight: bold;
    }

    /* taskbar */
    .taskbar {
        display: grid;
        grid-template-columns: 1fr auto 1fr;
        align-items: center;
        flex: none;
        height: 60px;
        background: linear-gradient(90deg, #dfebf6, #e0ecf8 17%, #d2e0fa 27%, #d8dcf4 32%, #d2e0fa 42%, #e8ecf5 50%, #f0f0f1 57%, #f0f1f4 86%, #e9ecf8 89%, #eff0f3 94%, #d8e9f6);
    }

    .weather {
        display: flex;
        align-items: center;
        gap: 13px;
        padding-left: 29px;
        line-height: 20px;
    }

    .weather svg {
        width: 24px;
        height: 24px;
    }

    .weather div,
    .clock {
        display: flex;
        flex-direction: column;
    }

    .sky {
        color: #5d6268;
    }

    .apps {
        display: flex;
        padding-left: 1px;
    }

    .app {
        position: relative;
        width: 49px;
        height: 49px;
        margin: 0 3px;
        border-radius: 5px;
    }

    .app.active {
        background: #fbfbfc;
        box-shadow: 0 0 1px #bbb;
    }

    .app-icon {
        width: 30px;
        height: 30px;
    }

    .badge {
        position: absolute;
        top: 2px;
        right: 3px;
        display: flex;
        align-items: center;
        justify-content: center;
        width: 20px;
        height: 20px;
        border-radius: 50%;
        background: #626db1;
        color: #fff;
        font-size: 13px;
    }

    .badge.blue {
        background: #0559a8;
    }

    .badge svg {
        width: 12px;
        height: 10px;
        fill: none;
        stroke: #fff;
    }

    .dot {
        position: absolute;
        bottom: 0;
        width: 8px;
        height: 4px;
        border-radius: 2px;
        background: #85878e;
    }

    .active .dot {
        width: 20px;
        background: #626db1;
    }

    .tray {
        display: flex;
        align-items: center;
        justify-content: flex-end;
        gap: 20px;
        padding-right: 24px;
    }

    .tray svg {
        width: 20px;
        height: 20px;
        fill: none;
        stroke: #202124;
        stroke-width: 1.5;
    }

    .tray-icons {
        display: flex;
        gap: 10px;
    }

    .clock {
        align-items: flex-end;
        line-height: 20px;
    }
</style>
